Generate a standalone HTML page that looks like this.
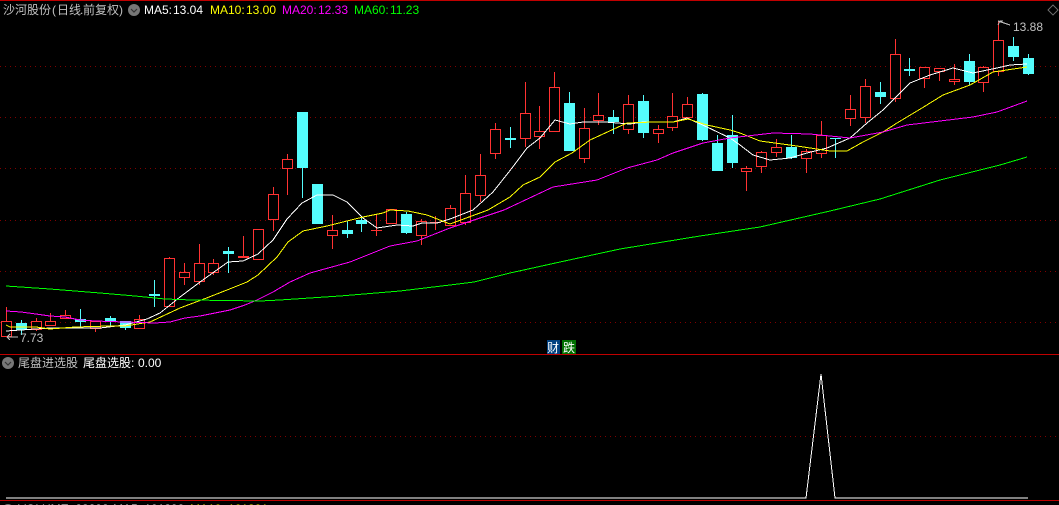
<!DOCTYPE html>
<html><head><meta charset="utf-8"><style>
html,body{margin:0;padding:0;background:#000;width:1059px;height:505px;overflow:hidden}
svg{display:block}
text{font-family:"Liberation Sans","WenQuanYi Zen Hei","Noto Sans CJK SC",sans-serif;font-size:12px}
</style></head><body>
<svg width="1059" height="505" viewBox="0 0 1059 505" xmlns="http://www.w3.org/2000/svg">
<rect width="1059" height="505" fill="#000"/>
<g stroke="#800000" stroke-dasharray="1 4" shape-rendering="crispEdges" fill="none">
<path d="M0 66.5H1059M0 117.5H1059M0 168.5H1059M0 220.5H1059M0 271.5H1059M0 322.5H1059M0 436.5H1059"/>
</g>
<g shape-rendering="crispEdges">
<path fill="none" stroke="#ff3232" d="M6.5 307V337M36.5 318V331M50.5 313V326M65.5 310V319M95.5 321V332M139.5 315V329M169.5 257V307M184.5 263V285M199.5 244V285M213.5 259V275M243.5 236V258M273.5 187V231M287.5 154V195M332.5 215V249M376.5 214V236M421.5 219V245M435.5 216V230M450.5 205V226M465.5 175V225M480.5 154V202M495.5 123V159M525.5 82V147M539.5 106V149M554.5 72V132M584.5 108V163M598.5 93V125M628.5 95V134M658.5 125V143M672.5 93V131M687.5 97V117M746.5 166V191M761.5 151V173M776.5 139V157M806.5 149V173M821.5 121V158M850.5 95V126M865.5 79V123M895.5 39V102M924.5 67V88M939.5 68V81M954.5 64V85M983.5 66V92M998.5 21V76"/>
<g fill="#000" stroke="#ff3232">
<rect x="1.5" y="321.5" width="10" height="15"/>
<rect x="31.5" y="321.5" width="10" height="8"/>
<rect x="45.5" y="321.5" width="10" height="4"/>
<rect x="60.5" y="315.5" width="10" height="3"/>
<rect x="90.5" y="321.5" width="10" height="7"/>
<rect x="134.5" y="319.5" width="10" height="9"/>
<rect x="164.5" y="258.5" width="10" height="48"/>
<rect x="179.5" y="272.5" width="10" height="5"/>
<rect x="194.5" y="263.5" width="10" height="18"/>
<rect x="208.5" y="263.5" width="10" height="9"/>
<rect x="238.5" y="256.5" width="10" height="1"/>
<rect x="253.5" y="229.5" width="10" height="30"/>
<rect x="268.5" y="194.5" width="10" height="25"/>
<rect x="282.5" y="159.5" width="10" height="9"/>
<rect x="327.5" y="230.5" width="10" height="5"/>
<rect x="386.5" y="209.5" width="10" height="14"/>
<rect x="416.5" y="221.5" width="10" height="14"/>
<rect x="445.5" y="208.5" width="10" height="17"/>
<rect x="460.5" y="193.5" width="10" height="29"/>
<rect x="475.5" y="175.5" width="10" height="20"/>
<rect x="490.5" y="129.5" width="10" height="24"/>
<rect x="520.5" y="113.5" width="10" height="25"/>
<rect x="534.5" y="131.5" width="10" height="5"/>
<rect x="549.5" y="87.5" width="10" height="44"/>
<rect x="579.5" y="128.5" width="10" height="30"/>
<rect x="593.5" y="115.5" width="10" height="5"/>
<rect x="623.5" y="104.5" width="10" height="25"/>
<rect x="653.5" y="129.5" width="10" height="4"/>
<rect x="667.5" y="116.5" width="10" height="11"/>
<rect x="682.5" y="104.5" width="10" height="13"/>
<rect x="741.5" y="168.5" width="10" height="3"/>
<rect x="756.5" y="152.5" width="10" height="14"/>
<rect x="771.5" y="147.5" width="10" height="5"/>
<rect x="801.5" y="151.5" width="10" height="7"/>
<rect x="816.5" y="135.5" width="10" height="18"/>
<rect x="845.5" y="109.5" width="10" height="9"/>
<rect x="860.5" y="86.5" width="10" height="31"/>
<rect x="890.5" y="54.5" width="10" height="44"/>
<rect x="919.5" y="67.5" width="10" height="11"/>
<rect x="934.5" y="68.5" width="10" height="3"/>
<rect x="949.5" y="79.5" width="10" height="2"/>
<rect x="978.5" y="67.5" width="10" height="15"/>
<rect x="993.5" y="40.5" width="10" height="31"/>
</g>
<rect x="371" y="230" width="11" height="1" fill="#ff3232"/>
<rect x="430" y="222" width="11" height="1" fill="#ff3232"/>
<path fill="none" stroke="#54fcfc" d="M21.5 320V335M80.5 309V327M110.5 316V326M125.5 321V330M154.5 280V307M228.5 247V273M302.5 112V198M317.5 184V224M347.5 221V238M361.5 217V232M406.5 212V234M510.5 127V148M569.5 92V151M613.5 110V134M643.5 95V138M702.5 93V141M717.5 135V171M732.5 115V168M791.5 135V159M835.5 138V158M880.5 82V104M909.5 58V76M969.5 54V85M1013.5 37V61M1028.5 54V75"/>
<g fill="#54fcfc">
<rect x="16" y="323" width="11" height="7"/>
<rect x="75" y="319" width="11" height="3"/>
<rect x="105" y="318" width="11" height="3"/>
<rect x="120" y="321" width="11" height="7"/>
<rect x="149" y="294" width="11" height="2"/>
<rect x="223" y="251" width="11" height="3"/>
<rect x="297" y="112" width="11" height="56"/>
<rect x="312" y="184" width="11" height="40"/>
<rect x="342" y="230" width="11" height="4"/>
<rect x="356" y="220" width="11" height="4"/>
<rect x="401" y="214" width="11" height="19"/>
<rect x="505" y="138" width="11" height="2"/>
<rect x="564" y="103" width="11" height="48"/>
<rect x="608" y="117" width="11" height="5"/>
<rect x="638" y="101" width="11" height="32"/>
<rect x="697" y="94" width="11" height="46"/>
<rect x="712" y="143" width="11" height="28"/>
<rect x="727" y="135" width="11" height="28"/>
<rect x="786" y="147" width="11" height="11"/>
<rect x="830" y="138" width="11" height="1"/>
<rect x="875" y="92" width="11" height="5"/>
<rect x="904" y="69" width="11" height="2"/>
<rect x="964" y="61" width="11" height="21"/>
<rect x="1008" y="46" width="11" height="11"/>
<rect x="1023" y="58" width="11" height="16"/>
</g>
<g fill="none" stroke-width="1">
<polyline stroke="#fff" points="6,331 50,328 100,328 125,325 147,319 160,313 180,297 200,282 228,262 243,261 258,254 273,240 287,219 302,203 317,195 333,195 347,202 363,218 377,228 397,225 413,226 422,223 437,223 450,219 473,210 493,192 512,168 527,148 540,138 555,120 570,124 583,122 605,122 630,124 643,122 673,122 687,118 707,127 730,138 740,145 753,155 770,160 790,158 807,153 827,148 850,138 867,123 883,110 910,83 930,75 953,68 973,73 997,68 1010,65 1027,64"/>
<polyline stroke="#ff0" points="6,325 10,327 36,327 50,329 75,327 110,326 125,326 150,322 180,308 204,299 227,290 247,282 258,275 277,257 288,242 303,231 327,226 363,217 383,213 390,210 408,211 427,215 450,224 488,210 510,197 523,185 540,177 555,162 572,153 590,140 627,123 653,122 673,122 688,119 707,125 730,130 740,133 760,141 797,146 830,151 847,151 863,142 883,132 897,123 922,108 943,95 970,85 993,72 1027,67"/>
<polyline stroke="#f0f" points="6,311 21,312 36,314 50,316 65,317 80,320 95,321 125,322 155,323 170,322 185,318 200,316 215,313 230,310 245,305 257,300 273,292 290,282 310,273 350,262 390,246 417,241 450,228 504,210 553,187 597,180 627,168 657,160 673,153 703,143 730,138 773,133 810,134 850,138 883,132 907,125 973,117 997,112 1027,101"/>
<polyline stroke="#0f0" points="6,286 50,289 100,293 135,296 165,299 192,300 260,301 280,300 340,296 400,291 450,285 474,282 510,273 560,262 620,249 700,236 760,227 830,211 880,199 940,180 1000,165 1027,157"/>
</g>
<polyline fill="none" stroke="#fff" points="6,498 806,498 821,374 835,498 1028,498"/>
<rect x="0" y="0" width="1059" height="1" fill="#c00000"/>
<rect x="0" y="354" width="1059" height="1" fill="#c00000"/>
<rect x="0" y="500" width="1059" height="1" fill="#c00000"/>
<path fill="none" stroke="#c0c0c0" d="M998 25L1000 21H1003M998 21L1010 25M7 337H18M7 337L10 334M7 337L10 340"/>
<path fill="none" stroke="#666" d="M1053 5L1058 10L1053 15L1048 10Z"/>
</g>
<text y="14" fill="#c0c0c0"><tspan x="3">沙河股份</tspan><tspan x="52">(</tspan><tspan x="57">日线</tspan><tspan x="80">.</tspan><tspan x="83">前复权</tspan><tspan x="119">)</tspan></text>
<circle cx="134" cy="10" r="6" fill="#777"/>
<path d="M131 9l3 3 3-3" fill="none" stroke="#333" stroke-width="1.2"/>
<text x="144" y="14" fill="#fff">MA5:</text><text x="173" y="14" fill="#fff">13.04</text>
<text x="210" y="14" fill="#ff0">MA10:</text><text x="246" y="14" fill="#ff0">13.00</text>
<text x="282" y="14" fill="#f0f">MA20:</text><text x="318" y="14" fill="#f0f">12.33</text>
<text x="354" y="14" fill="#0f0">MA60:</text><text x="390" y="14" fill="#0f0">11.23</text>
<text x="1013" y="31" fill="#c0c0c0">13.88</text>
<text x="20" y="342" fill="#c0c0c0">7.73</text>
<rect x="547" y="340" width="13" height="14" fill="#004080"/>
<rect x="562" y="340" width="14" height="14" fill="#007000"/>
<text x="547" y="352" fill="#fff">财</text>
<text x="563" y="352" fill="#fff">跌</text>
<circle cx="8" cy="363" r="6" fill="#777"/>
<path d="M5 362l3 3 3-3" fill="none" stroke="#333" stroke-width="1.2"/>
<text x="18" y="367" fill="#c0c0c0">尾盘进选股</text>
<text x="83" y="367" fill="#fff">尾盘选股:</text>
<text x="138" y="367" fill="#fff">0.00</text>
<circle cx="8" cy="510" r="6" fill="#777"/>
<text x="18" y="513" fill="#fff">VOLUME: 83892</text>
<text x="113" y="513" fill="#fff">MA5: 101399</text>
<text x="190" y="513" fill="#ff0">MA10: 101391</text>
</svg>
</body></html>
